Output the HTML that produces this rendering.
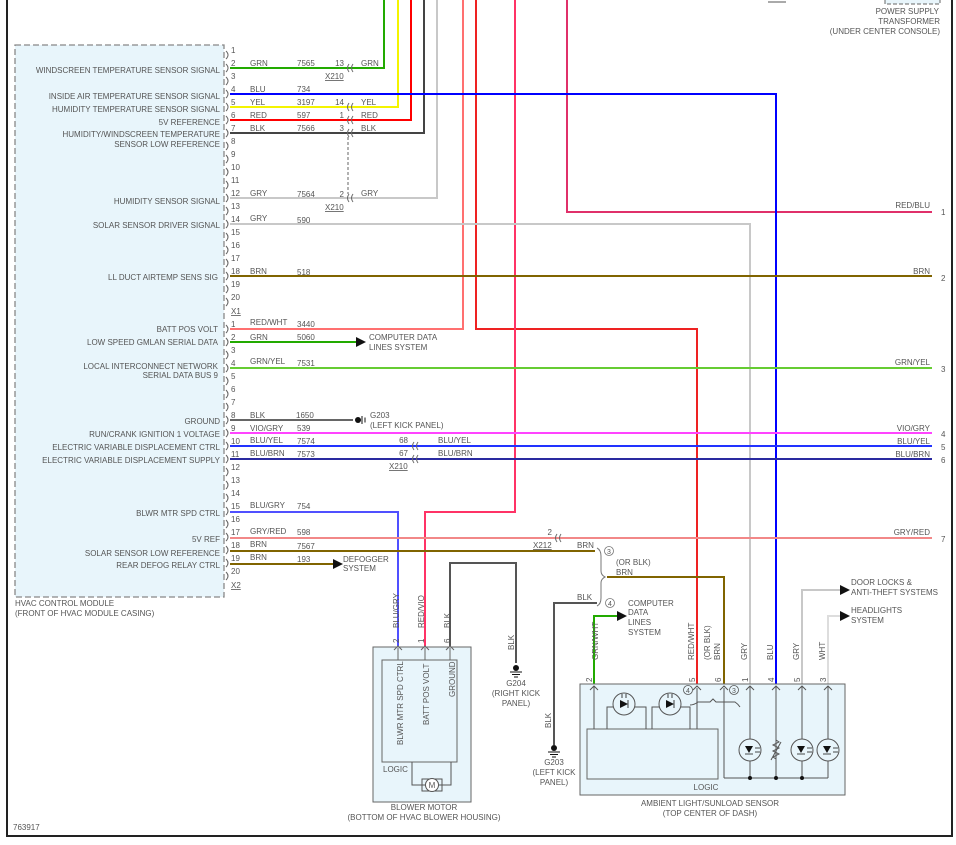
<!DOCTYPE html>
<html><head><meta charset="utf-8"><style>
html,body{margin:0;padding:0;background:#fff;}
svg{display:block;font-family:"Liberation Sans",sans-serif;}
text{font-size:8px;fill:#555;}
.r{text-anchor:end;}
.m{text-anchor:middle;}
.w{fill:none;stroke-width:2;}
.c{fill:none;stroke:#666;stroke-width:1;}
</style></head><body>
<svg width="956" height="845" viewBox="0 0 956 845">
<!-- page border -->
<path d="M7,0 V836 H952 V0" fill="none" stroke="#222" stroke-width="2"/>
<!-- HVAC module box -->
<rect x="15" y="45" width="209" height="552" fill="#e8f5fb" stroke="#888" stroke-width="1.3" stroke-dasharray="6,3"/>
<text x="15" y="606">HVAC CONTROL MODULE</text>
<text x="15" y="616">(FRONT OF HVAC MODULE CASING)</text>
<text x="13" y="830">763917</text>

<!-- top right -->
<line x1="768" y1="2" x2="786" y2="2" stroke="#555"/>
<rect x="885" y="-6" width="55" height="10" fill="#e8f5fb" stroke="#666" stroke-dasharray="4,2"/>
<text x="939" y="14" class="r">POWER SUPPLY</text>
<text x="940" y="24" class="r">TRANSFORMER</text>
<text x="940" y="34" class="r">(UNDER CENTER CONSOLE)</text>

<!-- wires -->
<path class="w" stroke="#22aa00" d="M230,68 H384 V0"/>
<path class="w" stroke="#f4f400" d="M230,107 H398 V0"/>
<path class="w" stroke="#ff0000" d="M230,120 H411 V0"/>
<path class="w" stroke="#444" d="M230,133 H424 V0"/>
<path class="w" stroke="#c8c8c8" d="M230,198 H437 V0"/>
<path class="w" stroke="#ff7070" d="M230,329 H463 V0"/>
<path class="w" stroke="#ee2222" d="M476,0 V329 H697 V685"/>
<path class="w" stroke="#ff3366" d="M515,0 V512 H425 V646"/>
<path class="w" stroke="#e0306a" d="M567,0 V212 H932"/>
<path class="w" stroke="#0000ff" d="M230,94 H776 V685"/>
<path class="w" stroke="#c8c8c8" d="M230,224 H750 V685"/>
<path class="w" stroke="#806400" d="M230,276 H932"/>
<path class="w" stroke="#22aa00" d="M230,342 H356"/>
<path d="M356,337 L366,342 L356,347Z" fill="#111"/>
<path class="w" stroke="#66cc33" d="M230,368 H932"/>
<path class="w" stroke="#666" d="M230,420 H353"/>
<path class="w" stroke="#ff44ff" d="M230,433 H932"/>
<path class="w" stroke="#2233ff" d="M230,446 H932"/>
<path class="w" stroke="#2a2aa0" d="M230,459 H932"/>
<path class="w" stroke="#5050ff" d="M230,512 H398 V646"/>
<path class="w" stroke="#f28888" d="M230,538 H932"/>
<path class="w" stroke="#806400" d="M230,551 H595"/>
<path class="w" stroke="#806400" d="M230,564 H333"/>
<path d="M333,559 L343,564 L333,569Z" fill="#111"/>
<path class="w" stroke="#806400" d="M607,577 H724 V685"/>
<path class="w" stroke="#555" d="M597,603 H554 V745"/>
<path class="w" stroke="#555" d="M450,646 V563 H516 V663"/>
<path class="w" stroke="#22aa00" d="M594,684 V616 H618"/>
<path d="M617,611 L627,616 L617,621Z" fill="#111"/>
<path class="w" stroke="#c8c8c8" d="M802,684 V590 H840"/>
<path d="M840,585 L850,590 L840,595Z" fill="#111"/>
<path class="w" stroke="#dddddd" d="M828,684 V616 H840"/>
<path d="M840,611 L850,616 L840,621Z" fill="#111"/>

<!-- ground G203 left -->
<circle cx="358" cy="420" r="3" fill="#111"/>
<path d="M362,416 V424 M365,417.5 V422.5" stroke="#111"/>
<text x="370" y="418">G203</text>
<text x="370" y="428">(LEFT KICK PANEL)</text>

<!-- module connector pins (first) -->
<g class="c">
<path d="M226,51 q4,4 0,8 M226,64 q4,4 0,8 M226,77 q4,4 0,8 M226,90 q4,4 0,8 M226,103 q4,4 0,8 M226,116 q4,4 0,8 M226,129 q4,4 0,8 M226,142 q4,4 0,8 M226,155 q4,4 0,8 M226,168 q4,4 0,8 M226,181 q4,4 0,8 M226,194 q4,4 0,8 M226,207 q4,4 0,8 M226,220 q4,4 0,8 M226,233 q4,4 0,8 M226,246 q4,4 0,8 M226,259 q4,4 0,8 M226,272 q4,4 0,8 M226,285 q4,4 0,8 M226,298 q4,4 0,8"/>
<path d="M226,325 q4,4 0,8 M226,338 q4,4 0,8 M226,351 q4,4 0,8 M226,364 q4,4 0,8 M226,377 q4,4 0,8 M226,390 q4,4 0,8 M226,403 q4,4 0,8 M226,416 q4,4 0,8 M226,429 q4,4 0,8 M226,442 q4,4 0,8 M226,455 q4,4 0,8 M226,468 q4,4 0,8 M226,481 q4,4 0,8 M226,494 q4,4 0,8 M226,507 q4,4 0,8 M226,520 q4,4 0,8 M226,533 q4,4 0,8 M226,546 q4,4 0,8 M226,559 q4,4 0,8 M226,572 q4,4 0,8"/>
</g>
<g>
<text x="231" y="53">1</text><text x="231" y="66">2</text><text x="231" y="79">3</text><text x="231" y="92">4</text><text x="231" y="105">5</text><text x="231" y="118">6</text><text x="231" y="131">7</text><text x="231" y="144">8</text><text x="231" y="157">9</text><text x="231" y="170">10</text><text x="231" y="183">11</text><text x="231" y="196">12</text><text x="231" y="209">13</text><text x="231" y="222">14</text><text x="231" y="235">15</text><text x="231" y="248">16</text><text x="231" y="261">17</text><text x="231" y="274">18</text><text x="231" y="287">19</text><text x="231" y="300">20</text>
<text x="231" y="314" text-decoration="underline">X1</text>
<text x="231" y="327">1</text><text x="231" y="340">2</text><text x="231" y="353">3</text><text x="231" y="366">4</text><text x="231" y="379">5</text><text x="231" y="392">6</text><text x="231" y="405">7</text><text x="231" y="418">8</text><text x="231" y="431">9</text><text x="231" y="444">10</text><text x="231" y="457">11</text><text x="231" y="470">12</text><text x="231" y="483">13</text><text x="231" y="496">14</text><text x="231" y="509">15</text><text x="231" y="522">16</text><text x="231" y="535">17</text><text x="231" y="548">18</text><text x="231" y="561">19</text><text x="231" y="574">20</text>
<text x="231" y="588" text-decoration="underline">X2</text>
</g>

<!-- left labels -->
<g class="r">
<text class="r" x="220" y="73">WINDSCREEN TEMPERATURE SENSOR SIGNAL</text>
<text class="r" x="220" y="99">INSIDE AIR TEMPERATURE SENSOR SIGNAL</text>
<text class="r" x="220" y="112">HUMIDITY TEMPERATURE SENSOR SIGNAL</text>
<text class="r" x="220" y="125">5V REFERENCE</text>
<text class="r" x="220" y="137">HUMIDITY/WINDSCREEN TEMPERATURE</text>
<text class="r" x="220" y="147">SENSOR LOW REFERENCE</text>
<text class="r" x="220" y="204">HUMIDITY SENSOR SIGNAL</text>
<text class="r" x="220" y="228">SOLAR SENSOR DRIVER SIGNAL</text>
<text class="r" x="218" y="280">LL DUCT AIRTEMP SENS SIG</text>
<text class="r" x="218" y="332">BATT POS VOLT</text>
<text class="r" x="218" y="345">LOW SPEED GMLAN SERIAL DATA</text>
<text class="r" x="218" y="369">LOCAL INTERCONNECT NETWORK</text>
<text class="r" x="218" y="378">SERIAL DATA BUS 9</text>
<text class="r" x="220" y="424">GROUND</text>
<text class="r" x="220" y="437">RUN/CRANK IGNITION 1 VOLTAGE</text>
<text class="r" x="220" y="450">ELECTRIC VARIABLE DISPLACEMENT CTRL</text>
<text class="r" x="220" y="463">ELECTRIC VARIABLE DISPLACEMENT SUPPLY</text>
<text class="r" x="220" y="516">BLWR MTR SPD CTRL</text>
<text class="r" x="220" y="542">5V REF</text>
<text class="r" x="220" y="556">SOLAR SENSOR LOW REFERENCE</text>
<text class="r" x="220" y="568">REAR DEFOG RELAY CTRL</text>
</g>

<!-- wire labels -->
<text x="250" y="66">GRN</text><text x="297" y="66">7565</text>
<text x="250" y="92">BLU</text><text x="297" y="92">734</text>
<text x="250" y="105">YEL</text><text x="297" y="105">3197</text>
<text x="250" y="118">RED</text><text x="297" y="118">597</text>
<text x="250" y="131">BLK</text><text x="297" y="131">7566</text>
<text x="250" y="196">GRY</text><text x="297" y="197">7564</text>
<text x="250" y="221">GRY</text><text x="297" y="223">590</text>
<text x="250" y="274">BRN</text><text x="297" y="275">518</text>
<text x="250" y="325">RED/WHT</text><text x="297" y="327">3440</text>
<text x="250" y="340">GRN</text><text x="297" y="340">5060</text>
<text x="250" y="364">GRN/YEL</text><text x="297" y="366">7531</text>
<text x="250" y="418">BLK</text><text x="296" y="418">1650</text>
<text x="250" y="431">VIO/GRY</text><text x="297" y="431">539</text>
<text x="250" y="443">BLU/YEL</text><text x="297" y="444">7574</text>
<text x="250" y="456">BLU/BRN</text><text x="297" y="457">7573</text>
<text x="250" y="508">BLU/GRY</text><text x="297" y="509">754</text>
<text x="250" y="534">GRY/RED</text><text x="297" y="535">598</text>
<text x="250" y="547">BRN</text><text x="297" y="549">7567</text>
<text x="250" y="560">BRN</text><text x="297" y="562">193</text>
<text x="369" y="340">COMPUTER DATA</text><text x="369" y="350">LINES SYSTEM</text>
<text x="343" y="562">DEFOGGER</text><text x="343" y="571">SYSTEM</text>

<!-- X210 connectors -->
<g class="c"><path d="M349,64 q-3,4 0,8 M353,64 q-3,4 0,8 M349,103 q-3,4 0,8 M353,103 q-3,4 0,8 M349,116 q-3,4 0,8 M353,116 q-3,4 0,8 M349,129 q-3,4 0,8 M353,129 q-3,4 0,8 M349,194 q-3,4 0,8 M353,194 q-3,4 0,8 M414,442 q-3,4 0,8 M418,442 q-3,4 0,8 M414,455 q-3,4 0,8 M418,455 q-3,4 0,8 M557,534 q-3,4 0,8 M561,534 q-3,4 0,8"/>
<path d="M348,137 V194" stroke-dasharray="3,2"/></g>
<text class="r" x="344" y="66">13</text><text x="361" y="66">GRN</text>
<text class="r" x="344" y="105">14</text><text x="361" y="105">YEL</text>
<text class="r" x="344" y="118">1</text><text x="361" y="118">RED</text>
<text class="r" x="344" y="131">3</text><text x="361" y="131">BLK</text>
<text class="r" x="344" y="197">2</text><text x="361" y="196">GRY</text>
<text x="325" y="79" text-decoration="underline">X210</text>
<text x="325" y="210" text-decoration="underline">X210</text>
<text class="r" x="408" y="443">68</text><text x="438" y="443">BLU/YEL</text>
<text class="r" x="408" y="456">67</text><text x="438" y="456">BLU/BRN</text>
<text x="389" y="469" text-decoration="underline">X210</text>
<text class="r" x="552" y="535">2</text>
<text x="533" y="548" text-decoration="underline">X212</text>

<!-- right labels -->
<text class="r" x="930" y="208">RED/BLU</text><text x="941" y="215">1</text>
<text class="r" x="930" y="274">BRN</text><text x="941" y="281">2</text>
<text class="r" x="930" y="365">GRN/YEL</text><text x="941" y="372">3</text>
<text class="r" x="930" y="431">VIO/GRY</text><text x="941" y="437">4</text>
<text class="r" x="930" y="444">BLU/YEL</text><text x="941" y="450">5</text>
<text class="r" x="930" y="457">BLU/BRN</text><text x="941" y="463">6</text>
<text class="r" x="930" y="535">GRY/RED</text><text x="941" y="542">7</text>

<!-- bracket region -->
<text x="577" y="548">BRN</text>
<text x="577" y="600">BLK</text>
<path d="M597,548 q4,2 4,8 V571 q0,4 4,6 q-4,2 -4,6 V598 q0,6 -4,8" fill="none" stroke="#777"/>
<circle cx="609" cy="551" r="4.5" fill="none" stroke="#777" stroke-width="0.8"/><text x="609" y="554" class="m" style="font-size:7px">3</text>
<circle cx="610" cy="603" r="4.5" fill="none" stroke="#777" stroke-width="0.8"/><text x="610" y="606" class="m" style="font-size:7px">4</text>
<text x="616" y="565">(OR BLK)</text><text x="616" y="575">BRN</text>
<text x="628" y="606">COMPUTER</text><text x="628" y="615">DATA</text><text x="628" y="625">LINES</text><text x="628" y="635">SYSTEM</text>
<text x="851" y="585">DOOR LOCKS &amp;</text><text x="851" y="595">ANTI-THEFT SYSTEMS</text>
<text x="851" y="613">HEADLIGHTS</text><text x="851" y="623">SYSTEM</text>

<!-- grounds -->
<circle cx="516" cy="668" r="3" fill="#111"/><path d="M510,672 H522 M512,674.5 H520 M514,677 H518" stroke="#111"/>
<text class="m" x="516" y="686">G204</text><text class="m" x="516" y="696">(RIGHT KICK</text><text class="m" x="516" y="706">PANEL)</text>
<circle cx="554" cy="748" r="3" fill="#111"/><path d="M548,752 H560 M550,754.5 H558 M552,757 H556" stroke="#111"/>
<text class="m" x="554" y="765">G203</text><text class="m" x="554" y="775">(LEFT KICK</text><text class="m" x="554" y="785">PANEL)</text>

<!-- rotated wire labels -->
<g>
<text transform="translate(399,628) rotate(-90)">BLU/GRY</text>
<text transform="translate(424,628) rotate(-90)">RED/VIO</text>
<text transform="translate(450,628) rotate(-90)">BLK</text>
<text transform="translate(514,650) rotate(-90)">BLK</text>
<text transform="translate(551,728) rotate(-90)">BLK</text>
<text transform="translate(598,660) rotate(-90)">GRN/WHT</text>
<text transform="translate(694,660) rotate(-90)">RED/WHT</text>
<text transform="translate(710,660) rotate(-90)">(OR BLK)</text>
<text transform="translate(720,660) rotate(-90)">BRN</text>
<text transform="translate(747,660) rotate(-90)">GRY</text>
<text transform="translate(773,660) rotate(-90)">BLU</text>
<text transform="translate(799,660) rotate(-90)">GRY</text>
<text transform="translate(825,660) rotate(-90)">WHT</text>
<text transform="translate(399,643) rotate(-90)">2</text>
<text transform="translate(424,643) rotate(-90)">1</text>
<text transform="translate(450,643) rotate(-90)">6</text>
<text transform="translate(592,682) rotate(-90)">2</text>
<text transform="translate(695,682) rotate(-90)">5</text>
<text transform="translate(721,682) rotate(-90)">6</text>
<text transform="translate(748,682) rotate(-90)">1</text>
<text transform="translate(774,682) rotate(-90)">4</text>
<text transform="translate(800,682) rotate(-90)">5</text>
<text transform="translate(826,682) rotate(-90)">3</text>
</g>

<!-- blower motor -->
<rect x="373" y="647" width="98" height="155" fill="#e8f5fb" stroke="#666"/>
<rect x="382" y="660" width="75" height="102" fill="none" stroke="#666"/>
<path d="M398,660 V648 M425,660 V648 M450,660 V648" stroke="#666"/>
<path class="c" d="M394,650 l4,-4 l4,4 M421,650 l4,-4 l4,4 M446,650 l4,-4 l4,4"/>
<text transform="translate(403,745) rotate(-90)">BLWR MTR SPD CTRL</text>
<text transform="translate(429,725) rotate(-90)">BATT POS VOLT</text>
<text transform="translate(455,697) rotate(-90)">GROUND</text>
<text x="383" y="772">LOGIC</text>
<path d="M412,762 V785 H425 M439,785 H451 V762" fill="none" stroke="#555"/>
<rect x="422" y="779" width="20" height="12" fill="none" stroke="#555"/>
<circle cx="432" cy="785" r="6.5" fill="#fff" stroke="#555"/>
<text class="m" x="432" y="788">M</text>
<text class="m" x="424" y="810">BLOWER MOTOR</text>
<text class="m" x="424" y="820">(BOTTOM OF HVAC BLOWER HOUSING)</text>

<!-- ambient sensor -->
<rect x="580" y="684" width="265" height="111" fill="#e8f5fb" stroke="#666"/>
<rect x="587" y="729" width="131" height="50" fill="none" stroke="#666"/>
<g stroke="#555" fill="none">
<path d="M594,729 V686 M697,729 V688 M724,778 V688 M750,778 V686 M776,778 V686 M802,778 V686 M828,778 V686 M724,778 H828"/>
<path d="M607,729 V707 H646 V729 M652,729 V707 H690 V729"/>
<path d="M690,705 q4,0 8,-3 H710 l3,-3 l3,3 H735 q3,2 5,5"/>
<path d="M590,690 l4,-4 l4,4 M693,690 l4,-4 l4,4 M720,690 l4,-4 l4,4 M746,690 l4,-4 l4,4 M772,690 l4,-4 l4,4 M798,690 l4,-4 l4,4 M824,690 l4,-4 l4,4"/>
<circle cx="624" cy="704" r="11" fill="#e8f5fb"/>
<circle cx="670" cy="704" r="11" fill="#e8f5fb"/>
<circle cx="750" cy="750" r="11" fill="#e8f5fb"/>
<circle cx="802" cy="750" r="11" fill="#e8f5fb"/>
<circle cx="828" cy="750" r="11" fill="#e8f5fb"/>
<path d="M776,740 l3,2 l-6,3 l6,3 l-6,3 l6,3 l-6,3 l3,2 M771,760 l10,-18"/>
<circle cx="688" cy="690" r="4.5" stroke-width="0.8"/><circle cx="734" cy="690" r="4.5" stroke-width="0.8"/>
</g>
<text class="m" x="688" y="693" style="font-size:7px">4</text>
<text class="m" x="734" y="693" style="font-size:7px">3</text>
<g fill="#111">
<path d="M620,700 L628,704 L620,708Z"/><path d="M666,700 L674,704 L666,708Z"/>
<path d="M745,746 L753,746 L749,753Z"/><path d="M797,746 L805,746 L801,753Z"/><path d="M823,746 L831,746 L827,753Z"/>
<circle cx="750" cy="778" r="2"/><circle cx="776" cy="778" r="2"/><circle cx="802" cy="778" r="2"/>
</g>
<g stroke="#111" stroke-width="0.8">
<path d="M628,700 V708 M674,700 V708 M745,754 H753 M797,754 H805 M823,754 H831 M622,698 V694 M626,698 V694 M668,698 V694 M672,698 V694 M755,748 H760 M755,752 H760 M807,748 H812 M807,752 H812 M833,748 H838 M833,752 H838"/>
</g>
<text class="m" x="706" y="790">LOGIC</text>
<text class="m" x="710" y="806">AMBIENT LIGHT/SUNLOAD SENSOR</text>
<text class="m" x="710" y="816">(TOP CENTER OF DASH)</text>
</svg>
</body></html>
